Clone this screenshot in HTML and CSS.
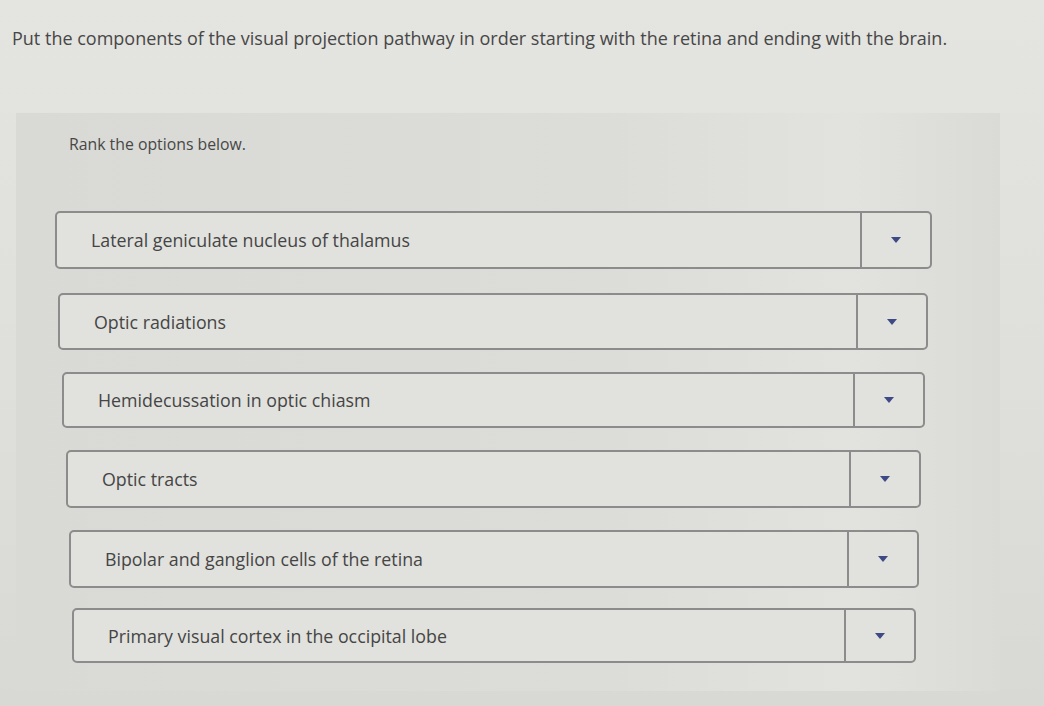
FILE: index.html
```html
<!DOCTYPE html>
<html>
<head>
    <title>Ranking question</title>
    <link rel="stylesheet" href="styles.css">
</head>
<body>
    <div class="question">
        <p class="prompt">Put the components of the visual projection pathway in order starting with the retina and ending with the brain.</p>

        <div class="rank-panel">
            <p class="hint">Rank the options below.</p>

            <div class="options">
                <div class="option">
                    <span class="label">Lateral geniculate nucleus of thalamus</span>
                    <span class="toggle"><span class="caret"></span></span>
                </div>
                <div class="option">
                    <span class="label">Optic radiations</span>
                    <span class="toggle"><span class="caret"></span></span>
                </div>
                <div class="option">
                    <span class="label">Hemidecussation in optic chiasm</span>
                    <span class="toggle"><span class="caret"></span></span>
                </div>
                <div class="option">
                    <span class="label">Optic tracts</span>
                    <span class="toggle"><span class="caret"></span></span>
                </div>
                <div class="option">
                    <span class="label">Bipolar and ganglion cells of the retina</span>
                    <span class="toggle"><span class="caret"></span></span>
                </div>
                <div class="option">
                    <span class="label">Primary visual cortex in the occipital lobe</span>
                    <span class="toggle"><span class="caret"></span></span>
                </div>
            </div>
        </div>
    </div>
</body>
</html>
```

FILE: styles.css
```css
body, html {
    margin: 0;
    height: 100%;
    font-family: "Open Sans", "Liberation Sans", sans-serif;
    color: #454545;
    background: linear-gradient(180deg, #e4e4e0 0%, #dededa 60%, #d8d8d4 100%);
}

.question {
    padding: 27px 0 0 12px;
}

.prompt {
    margin: 0;
    font-size: 18px;
    line-height: 22px;
    color: #474747;
}

.rank-panel {
    margin: 64px 44px 0 4px;
    height: 578px;
    background: linear-gradient(90deg, #d9d9d5 0%, #dcdcd8 60%, #e2e2de 85%, #dadad6 100%);
    box-sizing: border-box;
    padding: 20px 0 0 53px;
}

.hint {
    margin: 0;
    font-size: 15.8px;
    line-height: 22px;
    color: #474747;
}

.options {
    display: flex;
    flex-direction: column;
    gap: 22px;
    margin: 56px 0 0 -14px;
}

.option {
    display: flex;
    align-items: stretch;
    height: 58px;
    border: 2px solid #8c8c8c;
    border-radius: 5px;
    background-color: #e1e1dd;
    box-sizing: border-box;
}

/* rows narrow a little on the way down */
.option:nth-child(1) { margin: 0 68px 0 0; }
.option:nth-child(2) { margin: 2px 72px 0 3px; height: 57px; }
.option:nth-child(3) { margin: 0 75px 0 7px; height: 56px; }
.option:nth-child(4) { margin: 0 79px 0 11px; }
.option:nth-child(5) { margin: 0 81px 0 14px; }
.option:nth-child(6) { margin: -2px 84px 0 17px; height: 55px; }

.label {
    flex: 1;
    display: flex;
    align-items: center;
    padding-left: 34px;
    font-size: 17.8px;
    color: #454545;
    border-right: 2px solid #8c8c8c;
}

.toggle {
    width: 68px;
    display: flex;
    align-items: center;
    justify-content: center;
}

.caret {
    width: 0;
    height: 0;
    border-left: 5px solid transparent;
    border-right: 5px solid transparent;
    border-top: 6px solid #3e4a86;
}
```
